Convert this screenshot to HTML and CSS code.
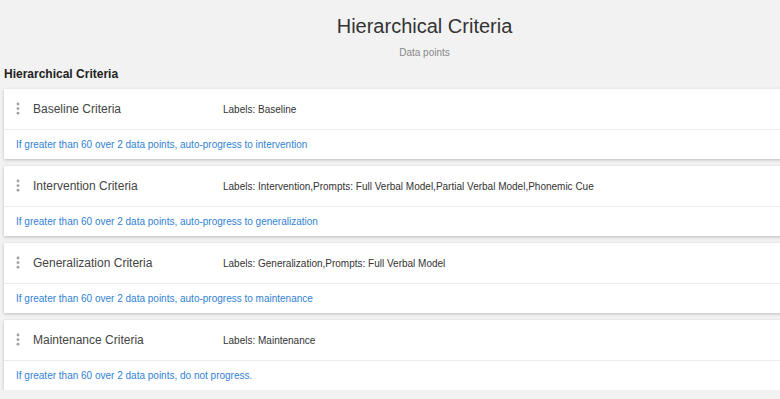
FILE: index.html
```html
<!doctype html>
<html>
  <head>
    <title>Hierarchical Criteria</title>
    <link rel="stylesheet" href="styles.css">
  </head>
  <body>
    <div id="page">
      <div id="pageHead">
        <h1>Hierarchical Criteria</h1>
        <p class="subtitle">Data points</p>
      </div>
      <h2 class="sectionTitle">Hierarchical Criteria</h2>
      <ul id="criteriaList">
        <li class="criteriaCard">
          <div class="cardHead">
            <span class="handle"><svg width="4" height="14" viewBox="0 0 4 14"><circle cx="2" cy="2" r="1.4"/><circle cx="2" cy="6.6" r="1.4"/><circle cx="2" cy="11.2" r="1.4"/></svg></span>
            <span class="criteriaName">Baseline Criteria</span>
            <span class="criteriaLabels">Labels: Baseline</span>
          </div>
          <div class="cardFoot">If greater than 60 over 2 data points, auto-progress to intervention</div>
        </li>
        <li class="criteriaCard">
          <div class="cardHead">
            <span class="handle"><svg width="4" height="14" viewBox="0 0 4 14"><circle cx="2" cy="2" r="1.4"/><circle cx="2" cy="6.6" r="1.4"/><circle cx="2" cy="11.2" r="1.4"/></svg></span>
            <span class="criteriaName">Intervention Criteria</span>
            <span class="criteriaLabels">Labels: Intervention,Prompts: Full Verbal Model,Partial Verbal Model,Phonemic Cue</span>
          </div>
          <div class="cardFoot">If greater than 60 over 2 data points, auto-progress to generalization</div>
        </li>
        <li class="criteriaCard">
          <div class="cardHead">
            <span class="handle"><svg width="4" height="14" viewBox="0 0 4 14"><circle cx="2" cy="2" r="1.4"/><circle cx="2" cy="6.6" r="1.4"/><circle cx="2" cy="11.2" r="1.4"/></svg></span>
            <span class="criteriaName">Generalization Criteria</span>
            <span class="criteriaLabels">Labels: Generalization,Prompts: Full Verbal Model</span>
          </div>
          <div class="cardFoot">If greater than 60 over 2 data points, auto-progress to maintenance</div>
        </li>
        <li class="criteriaCard">
          <div class="cardHead">
            <span class="handle"><svg width="4" height="14" viewBox="0 0 4 14"><circle cx="2" cy="2" r="1.4"/><circle cx="2" cy="6.6" r="1.4"/><circle cx="2" cy="11.2" r="1.4"/></svg></span>
            <span class="criteriaName">Maintenance Criteria</span>
            <span class="criteriaLabels">Labels: Maintenance</span>
          </div>
          <div class="cardFoot">If greater than 60 over 2 data points, do not progress.</div>
        </li>
      </ul>
    </div>
  </body>
</html>
```

FILE: styles.css
```css
html, body {
  margin: 0;
  overflow: hidden;
}

body {
  background: #f2f2f2;
  font-family: "Liberation Sans", Arial, sans-serif;
  color: #333;
}

#page {
  width: 841px;
  padding: 14px 0 0 4px;
}

#pageHead {
  text-align: center;
}

h1 {
  margin: 0;
  font-size: 20px;
  font-weight: normal;
  line-height: 24px;
  color: #333;
}

.subtitle {
  margin: 8px 0 0 0;
  font-size: 10px;
  line-height: 14px;
  color: #888;
}

.sectionTitle {
  margin: 6px 0 0 0;
  font-size: 12px;
  line-height: 16px;
  font-weight: bold;
  color: #222;
}

#criteriaList {
  list-style: none;
  margin: 7px 0 0 0;
  padding: 0;
  display: flex;
  flex-direction: column;
  gap: 7px;
}

.criteriaCard {
  background: #fff;
  box-shadow: 0 1px 3px rgba(0, 0, 0, 0.22);
}

.cardHead {
  display: flex;
  align-items: center;
  height: 40px;
  border-bottom: 1px solid #ececec;
}

.handle {
  width: 29px;
  display: flex;
  justify-content: center;
}

.handle svg {
  fill: #9e9e9e;
  margin-left: -1px;
}

.criteriaName {
  width: 190px;
  font-size: 12px;
  color: #444;
}

.criteriaLabels {
  font-size: 10px;
  color: #333;
}

.cardFoot {
  height: 29px;
  display: flex;
  align-items: center;
  padding-left: 12px;
  font-size: 10px;
  color: #3182d4;
}
```
